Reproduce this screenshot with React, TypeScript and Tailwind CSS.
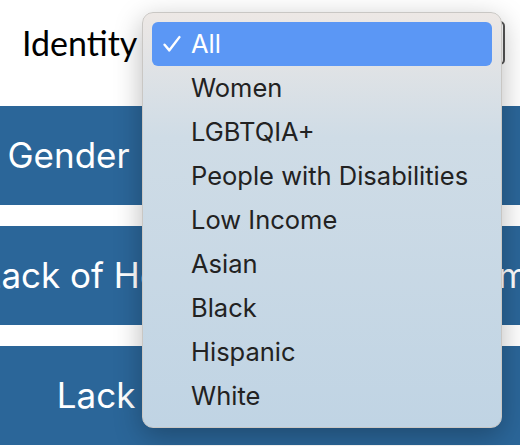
import React from "react";

const options = [
  "All",
  "Women",
  "LGBTQIA+",
  "People with Disabilities",
  "Low Income",
  "Asian",
  "Black",
  "Hispanic",
  "White",
];

const issues = [
  "Gender Pay Gap in the School",
  "Lack of Healthcare in the System",
  "Lack of Good Education",
];

const Check = () => (
  <svg width="18" height="18" viewBox="0 0 17 17" fill="none">
    <path d="M1.5 9.2 L6 14.5 L15.5 2" stroke="white" strokeWidth="2.3" strokeLinecap="round" strokeLinejoin="round" />
  </svg>
);

const Menu = () => (
  <div className="absolute left-[142px] top-[12px] w-[360px] rounded-[11px] border border-[#c9c7c4] bg-gradient-to-b from-[#ede8e5] via-[#cfdce6] via-30% to-[#c0d4e4] px-[9px] py-[9px] shadow-[0_8px_28px_rgba(0,0,0,0.28)]">
    {options.map((o, i) => (
      <div
        key={o}
        className={`flex h-[44px] items-center rounded-[6px] text-[25.5px] ${
          i === 0 ? "bg-[#5b97f5] text-white" : "text-[#222]"
        }`}
      >
        <span className="flex w-[39px] justify-end pr-[10px]">{i === 0 && <Check />}</span>
        <span>{o}</span>
      </div>
    ))}
  </div>
);

export default function App() {
  return (
    <div className="relative h-[446px] w-[520px] overflow-hidden bg-white">
      <div className="flex h-[86px] items-start pt-[21px] pl-[22px]">
        <span className="text-[34px] leading-[44px] text-black [font-family:Lato,sans-serif]">Identity</span>
        <div className="ml-[10px] h-[44px] w-[358px] rounded-[5px] border-2 border-[#555]" />
      </div>
      <div className="mt-[20px] flex flex-col gap-[21px]">
        {issues.map((t) => (
          <div key={t} className="flex h-[99px] shrink-0 items-center justify-center overflow-visible whitespace-nowrap bg-[#2b6699] pr-[10px] text-[35px] text-white [font-family:Inter,sans-serif]">
            {t}
          </div>
        ))}
      </div>
      <div className="[font-family:Inter,'Liberation_Sans',sans-serif]">
        <Menu />
      </div>
    </div>
  );
}
